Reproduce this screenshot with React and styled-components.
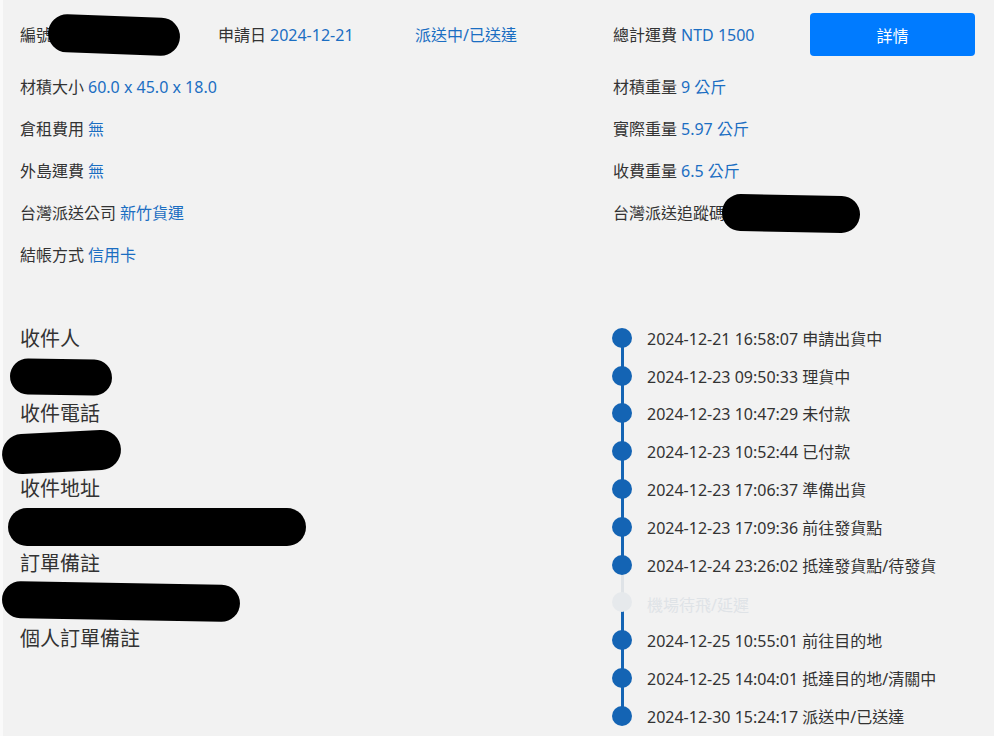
import styled, { createGlobalStyle } from 'styled-components';

const GlobalStyle = createGlobalStyle`
  body {
    margin: 0;
    background: #f2f2f2;
    font-family: "Noto Sans", "Noto Sans CJK TC", sans-serif;
    font-size: 16px;
    color: #333333;
  }
`;

const Page = styled.div`
  border-left: 3px solid #fafafa;
  padding: 13px 18px 0 17px;
  min-height: 736px;
  box-sizing: border-box;
`;

const HeaderRow = styled.div`
  display: grid;
  grid-template-columns: 198px 197px 198px 197px 165px;
  align-items: center;
  height: 43px;
`;

const Field = styled.div`
  display: flex;
  align-items: center;
  white-space: nowrap;
  line-height: 24px;
`;

const Value = styled.span`
  color: #1b6ec2;
  margin-left: 4px;
`;

const Status = styled.span`
  color: #1b6ec2;
`;

const Redact = styled.span`
  display: inline-block;
  width: ${(p) => p.$w}px;
  height: ${(p) => p.$h || 38}px;
  margin-left: ${(p) => p.$x || 0}px;
  background: #000;
  border-radius: ${(p) => (p.$h || 38) / 2}px;
  transform: rotate(${(p) => p.$r || 0}deg);
`;

const DetailButton = styled.button`
  height: 43px;
  width: 165px;
  border: none;
  border-radius: 4px;
  background: #007bff;
  color: #ffffff;
  font-family: inherit;
  font-size: 16px;
  cursor: pointer;
`;

const InfoGrid = styled.div`
  display: grid;
  grid-template-columns: 593px 1fr;
  grid-auto-rows: 42px;
  align-items: center;
  margin-top: 10px;
`;

const Lower = styled.div`
  display: grid;
  grid-template-columns: 592px 1fr;
  margin-top: 43px;
`;

const Recipient = styled.div`
  padding-top: 5px;
`;

const BlockLabel = styled.div`
  font-size: 20px;
  line-height: 30px;
  height: 30px;
`;

const BlockValue = styled.div`
  display: flex;
  align-items: center;
  height: 45px;
`;

const Timeline = styled.ul`
  list-style: none;
  margin: 0;
  padding: 0;
`;

const Step = styled.li`
  position: relative;
  display: flex;
  align-items: center;
  height: 37.8px;
  color: ${(p) => (p.$done ? '#333333' : '#dfe3e7')};

  &::before {
    content: '';
    display: ${(p) => (p.$first ? 'none' : 'block')};
    position: absolute;
    left: 8.5px;
    top: -50%;
    width: 3px;
    height: 100%;
    background: ${(p) => (p.$done ? '#1464b4' : '#dfe3e7')};
  }
`;

const Dot = styled.span`
  position: relative;
  z-index: 1;
  flex: none;
  width: 20px;
  height: 20px;
  border-radius: 50%;
  background: ${(p) => (p.$done ? '#1464b4' : '#e6e9ec')};
  margin-right: 15px;
`;

const StepText = styled.span`
  white-space: nowrap;
  position: relative;
  top: ${(p) => (p.$done ? 0 : 2)}px;
`;

const steps = [
  { t: '2024-12-21 16:58:07 申請出貨中', done: true },
  { t: '2024-12-23 09:50:33 理貨中', done: true },
  { t: '2024-12-23 10:47:29 未付款', done: true },
  { t: '2024-12-23 10:52:44 已付款', done: true },
  { t: '2024-12-23 17:06:37 準備出貨', done: true },
  { t: '2024-12-23 17:09:36 前往發貨點', done: true },
  { t: '2024-12-24 23:26:02 抵達發貨點/待發貨', done: true },
  { t: '機場待飛/延遲', done: false },
  { t: '2024-12-25 10:55:01 前往目的地', done: true },
  { t: '2024-12-25 14:04:01 抵達目的地/清關中', done: true },
  { t: '2024-12-30 15:24:17 派送中/已送達', done: true },
];

const recipient = [
  { label: '收件人', blob: { w: 102, h: 36, x: -10, r: 1 } },
  { label: '收件電話', blob: { w: 119, h: 40, x: -18, r: -3 } },
  { label: '收件地址', blob: { w: 298, h: 38, x: -12, r: 0 } },
  { label: '訂單備註', blob: { w: 238, h: 37, x: -18, r: 1 } },
  { label: '個人訂單備註', blob: null },
];

export default function App() {
  return (
    <>
      <GlobalStyle />
      <Page>
        <HeaderRow>
          <Field>
            編號<Redact $w={132} $h={38} $x={-4} $r={2} />
          </Field>
          <Field>
            申請日<Value>2024-12-21</Value>
          </Field>
          <Field>
            <Status>派送中/已送達</Status>
          </Field>
          <Field>
            總計運費<Value>NTD 1500</Value>
          </Field>
          <DetailButton>詳情</DetailButton>
        </HeaderRow>

        <InfoGrid>
          <Field>材積大小<Value>60.0 x 45.0 x 18.0</Value></Field>
          <Field>材積重量<Value>9 公斤</Value></Field>
          <Field>倉租費用<Value>無</Value></Field>
          <Field>實際重量<Value>5.97 公斤</Value></Field>
          <Field>外島運費<Value>無</Value></Field>
          <Field>收費重量<Value>6.5 公斤</Value></Field>
          <Field>台灣派送公司<Value>新竹貨運</Value></Field>
          <Field>
            台灣派送追蹤碼<Redact $w={138} $h={37} $x={-3} $r={1} />
          </Field>
          <Field>結帳方式<Value>信用卡</Value></Field>
        </InfoGrid>

        <Lower>
          <Recipient>
            {recipient.map((r) => (
              <div key={r.label}>
                <BlockLabel>{r.label}</BlockLabel>
                {r.blob && (
                  <BlockValue>
                    <Redact $w={r.blob.w} $h={r.blob.h} $x={r.blob.x} $r={r.blob.r} />
                  </BlockValue>
                )}
              </div>
            ))}
          </Recipient>
          <Timeline>
            {steps.map((s, i) => (
              <Step key={i} $done={s.done} $first={i === 0}>
                <Dot $done={s.done} />
                <StepText $done={s.done}>{s.t}</StepText>
              </Step>
            ))}
          </Timeline>
        </Lower>
      </Page>
    </>
  );
}
